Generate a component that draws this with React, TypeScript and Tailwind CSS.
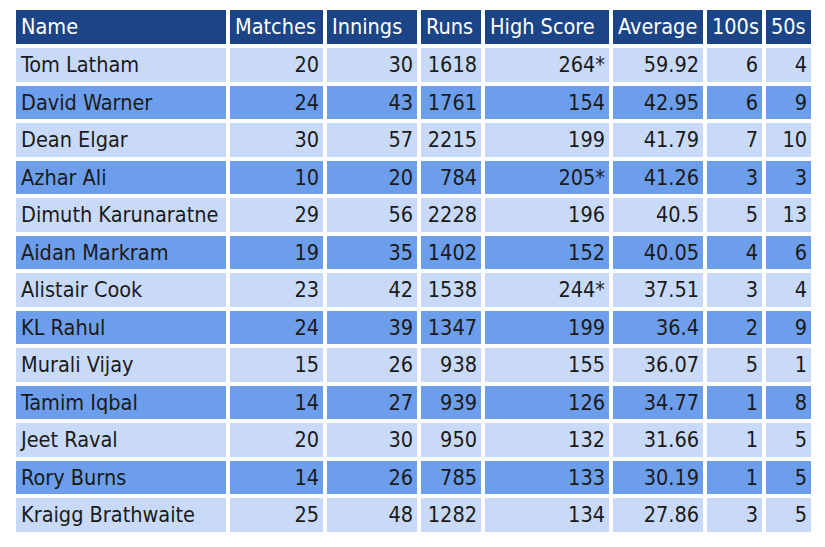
const headers = ["Name", "Matches", "Innings", "Runs", "High Score", "Average", "100s", "50s"];

const rows: (string | number)[][] = [
  ["Tom Latham", 20, 30, 1618, "264*", "59.92", 6, 4],
  ["David Warner", 24, 43, 1761, 154, "42.95", 6, 9],
  ["Dean Elgar", 30, 57, 2215, 199, "41.79", 7, 10],
  ["Azhar Ali", 10, 20, 784, "205*", "41.26", 3, 3],
  ["Dimuth Karunaratne", 29, 56, 2228, 196, "40.5", 5, 13],
  ["Aidan Markram", 19, 35, 1402, 152, "40.05", 4, 6],
  ["Alistair Cook", 23, 42, 1538, "244*", "37.51", 3, 4],
  ["KL Rahul", 24, 39, 1347, 199, "36.4", 2, 9],
  ["Murali Vijay", 15, 26, 938, 155, "36.07", 5, 1],
  ["Tamim Iqbal", 14, 27, 939, 126, "34.77", 1, 8],
  ["Jeet Raval", 20, 30, 950, 132, "31.66", 1, 5],
  ["Rory Burns", 14, 26, 785, 133, "30.19", 1, 5],
  ["Kraigg Brathwaite", 25, 48, 1282, 134, "27.86", 3, 5],
];

export default function App() {
  return (
    <div className="w-[825px] h-[547px] bg-white pt-[6px] pl-[12px] font-['DejaVu_Sans_Condensed',sans-serif] text-[21.5px] leading-none">
      <table className="table-fixed border-separate border-spacing-[4px]">
        <colgroup>
          <col className="w-[210px]" />
          <col className="w-[93px]" />
          <col className="w-[90px]" />
          <col className="w-[60px]" />
          <col className="w-[124px]" />
          <col className="w-[90px]" />
          <col className="w-[55px]" />
          <col className="w-[45px]" />
        </colgroup>
        <thead>
          <tr>
            {headers.map((h) => (
              <th
                key={h}
                className="h-[34px] p-0 pl-[5px] text-left font-normal text-white bg-[#1c4587] whitespace-nowrap overflow-hidden"
              >
                {h}
              </th>
            ))}
          </tr>
        </thead>
        <tbody>
          {rows.map((r, i) => (
            <tr key={r[0] as string} className={i % 2 === 0 ? "bg-[#c9daf8]" : "bg-[#6d9eeb]"}>
              {r.map((v, j) => (
                <td
                  key={j}
                  className={
                    j === 0
                      ? "h-[33.5px] p-0 pl-[5px] text-left text-[#1a1a1a] whitespace-nowrap"
                      : "h-[33.5px] p-0 pr-[4px] text-right text-[#1a1a1a] whitespace-nowrap"
                  }
                >
                  {v}
                </td>
              ))}
            </tr>
          ))}
        </tbody>
      </table>
    </div>
  );
}
